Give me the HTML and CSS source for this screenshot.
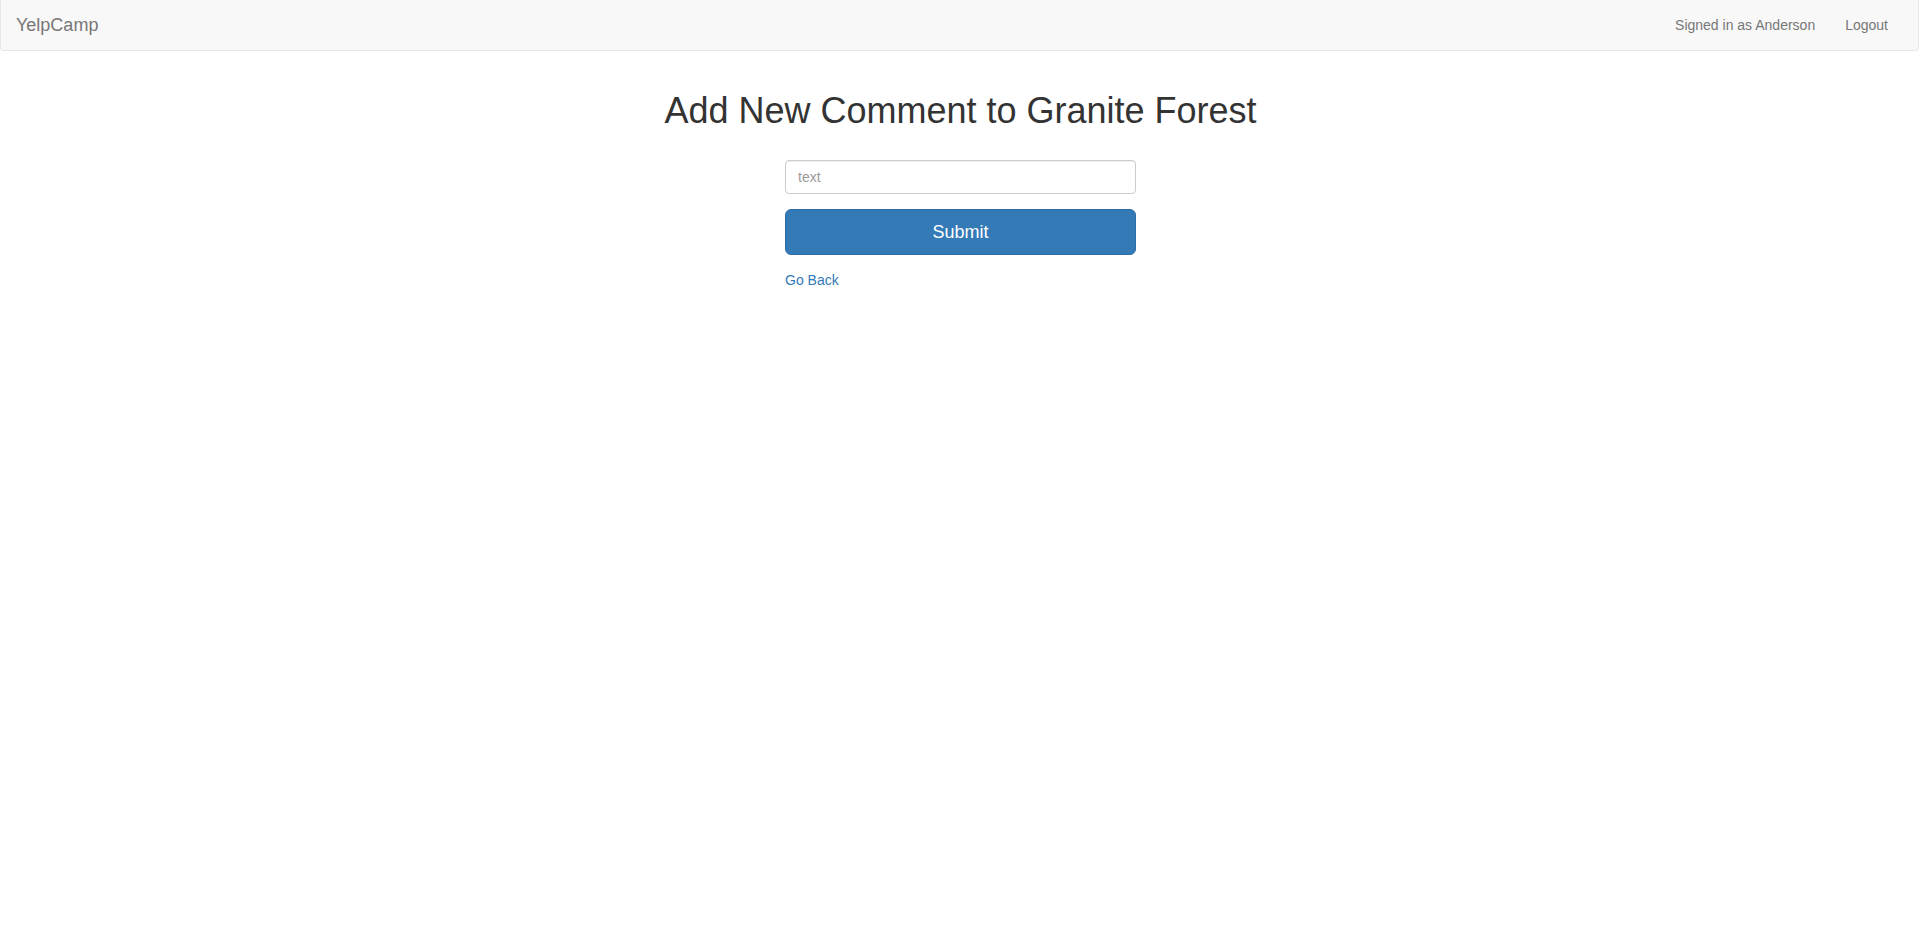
FILE: index.html
```html
<!DOCTYPE html>
<html lang="en">
<head>
<meta charset="utf-8">
<title>YelpCamp</title>
<link rel="stylesheet" href="styles.css">
</head>
<body>
<nav class="navbar">
  <div class="navbar-inner">
    <a class="brand" href="#">YelpCamp</a>
    <ul class="nav-right">
      <li><a href="#">Signed in as Anderson</a></li>
      <li><a href="#">Logout</a></li>
    </ul>
  </div>
</nav>
<main class="container">
  <h1 class="title">Add New Comment to Granite Forest</h1>
  <div class="form-wrap">
    <form class="comment-form">
      <div class="form-group">
        <input class="form-control" type="text" name="text" placeholder="text">
      </div>
      <div class="form-group">
        <button class="btn-submit" type="submit">Submit</button>
      </div>
    </form>
    <a class="back-link" href="#">Go Back</a>
  </div>
</main>
</body>
</html>
```

FILE: styles.css
```css
* { box-sizing: border-box; }
html, body { margin: 0; padding: 0; }
body {
  font-family: "Liberation Sans", Arial, Helvetica, sans-serif;
  font-size: 14px;
  line-height: 1.42857143;
  color: #333;
  background: #fff;
}
a { text-decoration: none; }

.navbar {
  height: 51px;
  background: #f8f8f8;
  border: 1px solid #e7e7e7;
  border-top: none;
  border-radius: 0 0 4px 4px;
  margin-bottom: 20px;
}
.navbar-inner {
  display: flex;
  justify-content: space-between;
  align-items: flex-start;
  height: 50px;
}
.brand {
  display: block;
  padding: 15px;
  font-size: 18px;
  line-height: 20px;
  height: 50px;
  color: #777;
}
.nav-right {
  display: flex;
  list-style: none;
  margin: 0;
  padding: 0 15px 0 0;
}
.nav-right a {
  display: block;
  padding: 15px;
  line-height: 20px;
  color: #777;
}

.container {
  padding: 20px 14px 0 16px;
  text-align: center;
}
.title {
  font-family: "Liberation Sans", Arial, Helvetica, sans-serif;
  font-weight: 500;
  font-size: 36px;
  line-height: 1.1;
  margin: 0;
  color: #333;
}
.form-wrap {
  width: 351px;
  margin: 29px auto 0;
  text-align: left;
}
.comment-form { margin: 0; }
.form-group { margin-bottom: 15px; }
.form-control {
  display: block;
  width: 100%;
  height: 34px;
  padding: 6px 12px;
  font-family: inherit;
  font-size: 14px;
  line-height: 1.42857143;
  color: #555;
  background: #fff;
  border: 1px solid #ccc;
  border-radius: 4px;
  box-shadow: inset 0 1px 1px rgba(0,0,0,.075);
}
.form-control::placeholder { color: #999; }
.btn-submit {
  display: block;
  width: 100%;
  height: 46px;
  padding: 10px 16px;
  font-family: inherit;
  font-size: 18px;
  line-height: 1.3333333;
  color: #fff;
  background: #337ab7;
  border: 1px solid #2e6da4;
  border-radius: 6px;
  cursor: pointer;
}
.back-link {
  color: #337ab7;
  font-size: 14px;
  line-height: 20px;
}
```
